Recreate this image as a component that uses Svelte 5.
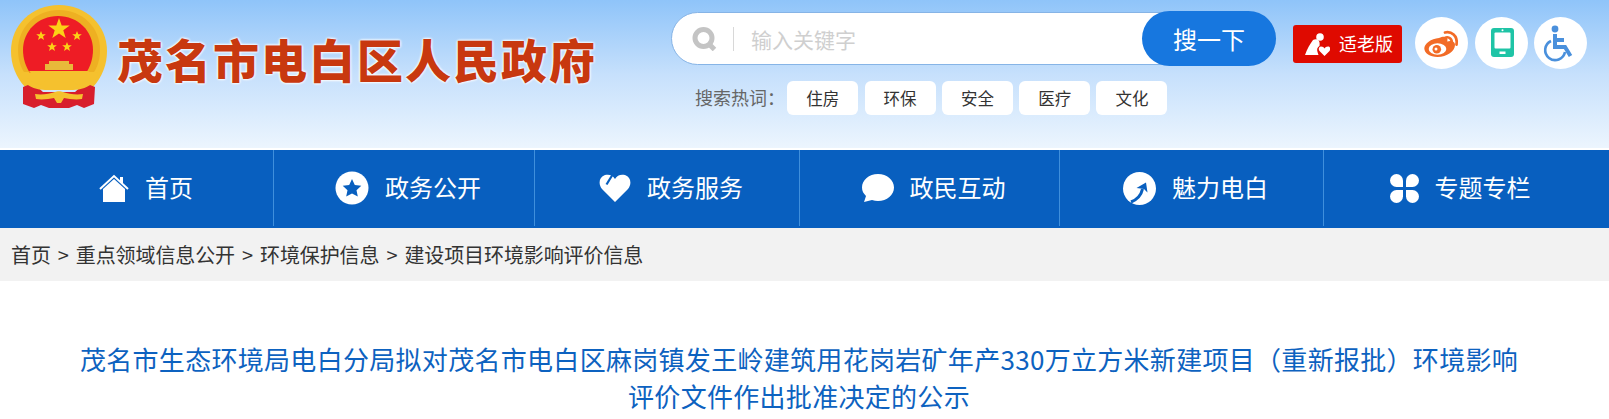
<script>
  const hotWords = ['住房', '环保', '安全', '医疗', '文化'];
  const crumbs = ['首页', '重点领域信息公开', '环境保护信息', '建设项目环境影响评价信息'];
  const navItems = [
    { label: '首页', icon: 'home', width: 263 },
    { label: '政务公开', icon: 'star', width: 261 },
    { label: '政务服务', icon: 'heart', width: 265 },
    { label: '政民互动', icon: 'bubble', width: 260 },
    { label: '魅力电白', icon: 'arrow', width: 264 },
    { label: '专题专栏', icon: 'clover', width: 264 }
  ];
</script>

{#snippet navIcon(name)}
  {#if name === 'home'}
    <svg class="nav-icon" width="30" height="28" viewBox="0 0 30 28">
      <path d="M1 15 15 2 29 15" fill="none" stroke="#fff" stroke-width="2" />
      <path d="M21 3h3v7l-3-3z" fill="#fff" />
      <path d="M4 15 15 5l11 10v13H4z" fill="#fff" />
    </svg>
  {:else if name === 'star'}
    <svg class="nav-icon" width="34" height="34" viewBox="0 0 34 34">
      <circle cx="17" cy="17" r="16.5" fill="#fff" />
      <path d="m17 8 2.8 6 6.5.8-4.8 4.4 1.3 6.4-5.8-3.2-5.8 3.2 1.3-6.4-4.8-4.4 6.5-.8z" fill="#085fbf" />
    </svg>
  {:else if name === 'heart'}
    <svg class="nav-icon" width="32" height="28" viewBox="0 0 32 28">
      <path d="M16 28 3 15C-1 10 0 3 6 1c4-1 8 0 10 4 2-4 6-5 10-4 6 2 7 9 3 14z" fill="#fff" />
      <path d="M14 0 7.500 10.500" fill="none" stroke="#085fbf" stroke-width="2.200" />
    </svg>
  {:else if name === 'bubble'}
    <svg class="nav-icon" width="32" height="28" viewBox="0 0 32 28">
      <path d="M16 0c9 0 16 6 16 13.500S25 27 16 27c-2 0-4-.3-6-.9L2 28l2-6C1.500 19.500 0 17 0 13.500 0 6 7 0 16 0z" fill="#fff" />
    </svg>
  {:else if name === 'arrow'}
    <svg class="nav-icon" width="33" height="33" viewBox="0 0 33 33">
      <circle cx="16.500" cy="16.500" r="16.500" fill="#fff" />
      <path d="M8 30c5-2 10-6 11.500-13" fill="none" stroke="#085fbf" stroke-width="3" />
      <path d="m13.500 16 9.500-5.500 1.500 10-3.500-3.500z" fill="#085fbf" />
    </svg>
  {:else}
    <svg class="nav-icon" width="29" height="29" viewBox="0 0 29 29">
      <path d="M13 13H6.500A6.500 6.500 0 1 1 13 6.500z" fill="#fff" />
      <path d="M16 13h6.500A6.500 6.500 0 1 0 16 6.500z" fill="#fff" />
      <path d="M13 16H6.500A6.500 6.500 0 1 0 13 22.500z" fill="#fff" />
      <path d="M16 16h6.500A6.500 6.500 0 1 1 16 22.500z" fill="#fff" />
    </svg>
  {/if}
{/snippet}

<header class="top">
  <div class="logo">
    <svg class="emblem" width="96" height="104" viewBox="0 0 96 104">
      <path d="M48 0c27 0 48 20 48 46 0 14-5 26-14 36H14C5 72 0 60 0 46 0 20 21 0 48 0z" fill="#f5c12e" />
      <path d="M48 5c23 0 41 17 41 40 0 8-2 16-6 22H13C9 61 7 53 7 45 7 22 25 5 48 5z" fill="#eeb022" />
      <path d="M47 11c20 0 35 15 35 34 0 9-3 17-7 23H19c-4-6-7-14-7-23 0-19 15-34 35-34z" fill="#ee1c25" />
      <path d="m48 13 2.700 7.500h8l-6.400 4.800 2.400 7.700L48 28.400 41.300 33l2.400-7.700-6.400-4.800h8z" fill="#fcd116" />
      <path d="m30 26 1.300 3.300h3.500l-2.800 2.200 1 3.500-3-2-3 2 1-3.500-2.800-2.200h3.500z" fill="#fcd116" />
      <path d="m66 26 1.300 3.300h3.500l-2.800 2.200 1 3.500-3-2-3 2 1-3.500-2.800-2.200h3.500z" fill="#fcd116" />
      <path d="m41 37 1.300 3.300h3.500l-2.800 2.200 1 3.500-3-2-3 2 1-3.500-2.800-2.200h3.500z" fill="#fcd116" />
      <path d="m56 37 1.300 3.300h3.500l-2.800 2.200 1 3.500-3-2-3 2 1-3.500-2.800-2.200h3.500z" fill="#fcd116" />
      <path d="M38 56h20v3h4v6H34v-6h4z" fill="#e8b93a" />
      <path d="M18 66h60l-3 4H21z" fill="#f5c12e" />
      <path d="M12 82 22 78l10 9h32l10-9 10 4 -1 17-10 4-7-3-8 3H38l-8-3-7 3-11-4z" fill="#d81e2c" />
      <path d="M8 64c8 10 14 14 22 16 6-6 12-8 18-8s12 2 18 8c8-2 14-6 22-16l-4 13c-7 5-14 8-22 8H34c-8 0-15-3-22-8z" fill="#f5c12e" />
      <path d="M24 89c7 1 14 0 20-2 2-1 6-1 8 0 6 2 13 3 20 2l-1 5c-6 1-13 0-18-1l-3 5h-4l-3-5c-5 1-12 2-18 1z" fill="#f5c12e" />
    </svg>
    <span class="logo-text">茂名市电白区人民政府</span>
  </div>

  <div class="search">
    <div class="search-box">
      <svg class="search-icon" width="25" height="24" viewBox="0 0 25 24">
        <circle cx="11.500" cy="11" r="8.500" fill="none" stroke="#c4c4c4" stroke-width="5" />
        <path d="m17 17 5.500 5.500" stroke="#c4c4c4" stroke-width="5" />
      </svg>
      <span class="divider"></span>
      <span class="placeholder">输入关键字</span>
      <button class="search-btn">搜一下</button>
    </div>
    <div class="hot">
      <span class="hot-label">搜索热词：</span>
      {#each hotWords as word}
        <span class="tag">{word}</span>
      {/each}
    </div>
  </div>

  <div class="tools">
    <div class="elder">
      <svg width="25" height="23" viewBox="0 0 25 23">
        <circle cx="15" cy="4" r="3.800" fill="#fff" />
        <path d="M8 7c2-1 5-1 6 1 1 2 .5 4 .5 5-2 1-3 3-2 6l1 3H0C2 16 5 11 8 7z" fill="#fff" />
        <path d="M19.500 23l-5-5c-1.500-2-.5-4.500 1.500-4.500 1.500 0 3 .7 3.500 2 .5-1.300 2-2 3.500-2 2 0 3 2.500 1.500 4.500z" fill="#fff" />
      </svg>
      <span class="elder-text">适老版</span>
    </div>
    <div class="round">
      <svg width="53" height="52" viewBox="0 0 53 52">
        <path d="M24 21c4-2 7-1.500 8 0 .7 1 .5 2.500.2 3.500 3-1 7.800-.8 7.800 3.500C40 34 32 40 22.500 40 15 40 9.300 36.500 9.300 31.300 9.300 27 16 21.500 24 21z" fill="#f26b26" />
        <ellipse cx="22.500" cy="32" rx="8.800" ry="5.800" fill="#fff" />
        <circle cx="21.800" cy="32.300" r="4.300" fill="#f26b26" />
        <circle cx="21" cy="32" r="1.500" fill="#fff" />
        <path d="M30 15.500c6-1.500 13 3 11.500 12" fill="none" stroke="#f26b26" stroke-width="2.800" stroke-linecap="round" />
        <path d="M31 20.500c3-.8 6.500 1.500 5.700 6" fill="none" stroke="#f26b26" stroke-width="2.600" stroke-linecap="round" />
      </svg>
    </div>
    <div class="round">
      <svg width="53" height="52" viewBox="0 0 53 52">
        <rect x="16" y="11" width="23" height="29" rx="3" fill="#1fc4a6" />
        <rect x="19.500" y="15.500" width="16" height="16" rx="1" fill="#fff" />
        <circle cx="27.500" cy="13.300" r="1" fill="#fff" />
        <rect x="24.500" y="34.500" width="6" height="2.500" fill="#fff" />
      </svg>
    </div>
    <div class="round">
      <svg width="53" height="52" viewBox="0 0 53 52">
        <circle cx="21" cy="12" r="3.400" fill="#4a90dc" />
        <path d="M21 17v13h10l5.500 9M21 23h9" fill="none" stroke="#4a90dc" stroke-width="4" />
        <path d="M17 24a10 10 0 1 0 14 11" fill="none" stroke="#4a90dc" stroke-width="2.600" />
      </svg>
    </div>
  </div>
</header>

<nav class="nav">
  {#each navItems as item}
    <a class="nav-item" style="width: {item.width}px">
      {@render navIcon(item.icon)}
      <span class="nav-label">{item.label}</span>
    </a>
  {/each}
</nav>

<div class="crumbs">
  {#each crumbs as crumb, i}
    {#if i > 0}<span class="sep">&gt;</span>{/if}
    <span>{crumb}</span>
  {/each}
</div>

<h1 class="title">茂名市生态环境局电白分局拟对茂名市电白区麻岗镇发王岭建筑用花岗岩矿年产330万立方米新建项目（重新报批）环境影响评价文件作出批准决定的公示</h1>

<style>
  :global(body) {
    margin: 0;
    background: #fff;
    font-family: "Noto Sans CJK SC", "Noto Sans", sans-serif;
    overflow: hidden;
  }

  .top {
    display: flex;
    height: 148px;
    margin-bottom: 2px;
    padding-left: 11px;
    box-sizing: border-box;
    background: linear-gradient(180deg, #8fc4f9 0%, #c6e0fc 50%, #ecf5fe 100%);
  }

  .logo {
    display: flex;
    width: 660px;
    flex-shrink: 0;
    padding-top: 5px;
    box-sizing: border-box;
  }

  .emblem {
    flex-shrink: 0;
  }

  .logo-text {
    height: 50px;
    margin: 28px 0 0 10px;
    font-size: 46px;
    font-weight: 900;
    line-height: 50px;
    letter-spacing: 2px;
    white-space: nowrap;
    color: #c8380f;
    text-shadow: 0 0 3px #fff, 0 0 3px #fff, 0 0 2px #fff;
  }

  .search {
    width: 605px;
    flex-shrink: 0;
    padding-top: 12px;
  }

  .search-box {
    display: flex;
    align-items: center;
    height: 53px;
    box-sizing: border-box;
    padding-left: 20px;
    background: #fff;
    border: 1px solid #86b4e6;
    border-radius: 27px;
  }

  .search-icon {
    flex-shrink: 0;
  }

  .divider {
    width: 1px;
    height: 24px;
    margin-left: 16px;
    background: #d8d8d8;
  }

  .placeholder {
    margin-left: 17px;
    font-size: 21px;
    color: #cfcfcf;
  }

  .search-btn {
    width: 134px;
    height: 55px;
    margin: 0 -1px 0 auto;
    padding: 0;
    border: none;
    border-radius: 28px;
    background: #1777df;
    color: #fff;
    font: 24px "Noto Sans CJK SC", sans-serif;
  }

  .hot {
    display: flex;
    align-items: center;
    gap: 6.300px;
    margin-top: 16px;
    padding-left: 25px;
  }

  .hot-label {
    width: 85px;
    margin: -2px 1px 0 -1px;
    font-size: 18px;
    white-space: nowrap;
    color: #666;
  }

  .tag {
    width: 71px;
    height: 34px;
    border-radius: 6px;
    background: #fff;
    font-size: 16.500px;
    line-height: 34px;
    text-align: center;
    color: #333;
  }

  .tools {
    display: flex;
    align-items: flex-start;
    gap: 6.500px;
    margin-left: 17px;
    padding-top: 17px;
  }

  .elder {
    display: flex;
    align-items: center;
    gap: 9px;
    width: 109px;
    height: 38px;
    margin: 8px 6.500px 0 0;
    padding-left: 12px;
    box-sizing: border-box;
    border-radius: 3px;
    background: #df0a00;
    font-size: 18px;
    color: #fff;
  }

  .elder-text {
    margin-top: -3px;
  }

  .round {
    width: 53px;
    height: 52px;
    border-radius: 50%;
    background: #fff;
  }

  .round svg {
    display: block;
  }

  .nav {
    display: flex;
    height: 78px;
    padding: 0 0 2px 11px;
    box-sizing: border-box;
    background: #085fbf;
  }

  .nav-item {
    display: flex;
    align-items: center;
    justify-content: center;
    gap: 16px;
    height: 76px;
    padding-left: 8px;
    box-sizing: border-box;
    border-right: 1px solid #3f8fdc;
    font-size: 24px;
    color: #fff;
  }

  .nav-item:last-child {
    border-right: none;
  }

  .nav-icon {
    flex-shrink: 0;
  }

  .nav-label {
    margin-top: -4px;
  }

  .crumbs {
    display: flex;
    align-items: center;
    height: 53px;
    padding-left: 11px;
    background: #f2f2f2;
    font-size: 20px;
    letter-spacing: -0.100px;
    color: #333;
  }

  .sep {
    margin: 0 7px;
  }

  .title {
    width: 1450px;
    margin: 59px 0 0 74px;
    font-size: 26px;
    font-weight: 400;
    line-height: 37px;
    letter-spacing: 0.300px;
    text-align: center;
    color: #0d62c0;
  }
</style>
